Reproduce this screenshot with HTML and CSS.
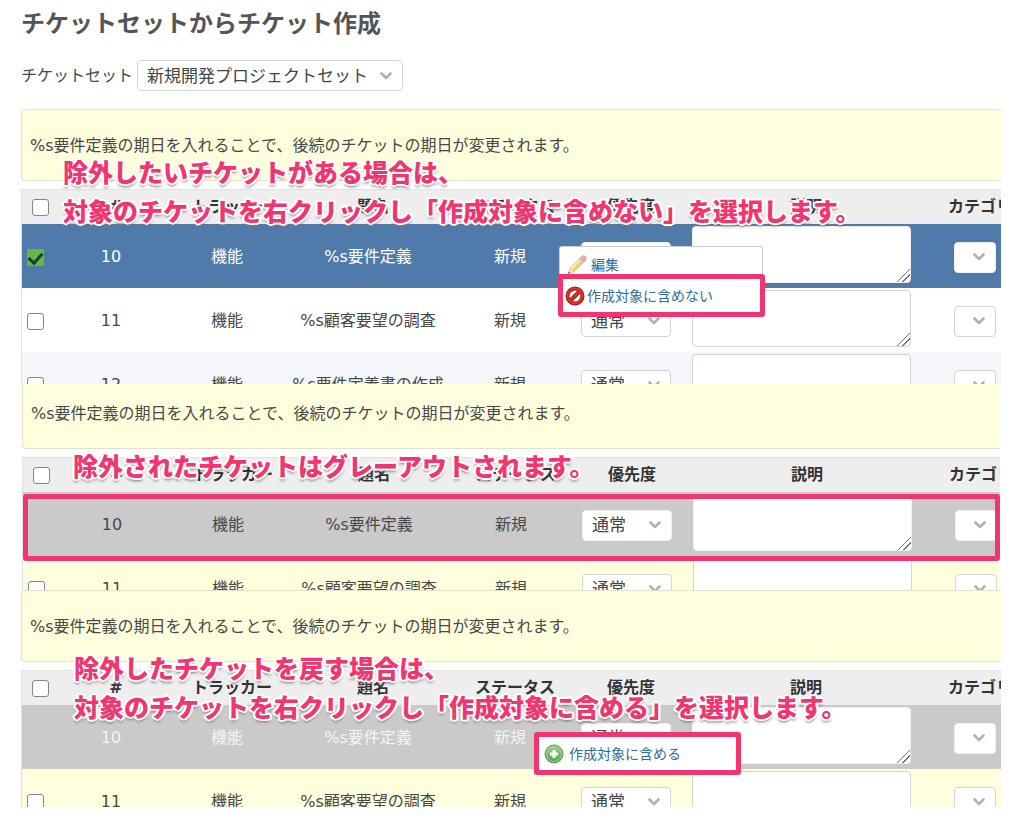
FILE: index.html
```
<!DOCTYPE html>
<html lang="ja">
<head>
<meta charset="utf-8">
<title>チケットセットからチケット作成</title>
<link rel="stylesheet" href="styles.css">
</head>
<body>
<svg class="sprite" aria-hidden="true">
  <symbol id="chevron" viewBox="0 0 12 8"><path d="M1.500 1.500 6 6l4.500-4.500" fill="none" stroke="#b0b0b0" stroke-width="2.600" stroke-linecap="round" stroke-linejoin="round"/></symbol>
</svg>
<main class="page">
  <h1 class="title">チケットセットからチケット作成</h1>
  <div class="set-picker">
    <label for="ticket-set">チケットセット</label>
    <span class="select select-set"><select id="ticket-set"><option>新規開発プロジェクトセット</option></select><svg><use href="#chevron"/></svg></span>
  </div>

  <section class="panel panel-select">
    <p class="notice">%s要件定義の期日を入れることで、後続のチケットの期日が変更されます。</p>
    <table class="tickets">
      <colgroup><col class="c-check"><col class="c-id"><col class="c-tracker"><col class="c-subject"><col class="c-status"><col class="c-priority"><col class="c-desc"><col class="c-category"></colgroup>
      <thead><tr><th><input type="checkbox" aria-label="すべて選択"></th><th>#</th><th>トラッカー</th><th>題名</th><th>ステータス</th><th>優先度</th><th>説明</th><th>カテゴリ</th></tr></thead>
      <tbody>
        <tr class="selected"><td><input type="checkbox" aria-label="10" checked></td><td>10</td><td>機能</td><td>%s要件定義</td><td>新規</td>
          <td><span class="select select-priority"><select aria-label="優先度"><option>通常</option></select><svg><use href="#chevron"/></svg></span></td>
          <td class="desc"><textarea aria-label="説明"></textarea></td>
          <td><span class="select select-category"><select aria-label="カテゴリ"><option></option></select><svg><use href="#chevron"/></svg></span></td></tr>
        <tr><td><input type="checkbox" aria-label="11"></td><td>11</td><td>機能</td><td>%s顧客要望の調査</td><td>新規</td>
          <td><span class="select select-priority"><select aria-label="優先度"><option>通常</option></select><svg><use href="#chevron"/></svg></span></td>
          <td class="desc"><textarea aria-label="説明"></textarea></td>
          <td><span class="select select-category"><select aria-label="カテゴリ"><option></option></select><svg><use href="#chevron"/></svg></span></td></tr>
        <tr class="even"><td><input type="checkbox" aria-label="12"></td><td>12</td><td>機能</td><td>%s要件定義書の作成</td><td>新規</td>
          <td><span class="select select-priority"><select aria-label="優先度"><option>通常</option></select><svg><use href="#chevron"/></svg></span></td>
          <td class="desc"><textarea aria-label="説明"></textarea></td>
          <td><span class="select select-category"><select aria-label="カテゴリ"><option></option></select><svg><use href="#chevron"/></svg></span></td></tr>
      </tbody>
    </table>
    <p class="callout">除外したいチケットがある場合は、<br>対象のチケットを右クリックし「作成対象に含めない」を選択します。</p>
    <div class="menu menu-exclude">
      <a class="item item-edit" href="#edit"><svg viewBox="0 0 20 20"><path d="M1 19l2-6L14 2l4 4L7 17z" fill="#f2d36b" stroke="#d9b96e" stroke-width=".6"/><path d="M4 14 15 3" stroke="#fff2a8" stroke-width="2"/><path d="M13 3l2-2q2-1 3.500.5T19 5l-2 2z" fill="#f0a9a6" stroke="#d9a09c" stroke-width=".6"/><path d="M12 4l4 4" stroke="#c4c4c8" stroke-width="1.500"/><path d="M1 19l2-5.500L6.500 17z" fill="#f3dfc3"/><path d="M1 19l.8-2.300L3.300 18z" fill="#555"/></svg>編集</a>
      <a class="item item-framed" href="#exclude"><svg viewBox="0 0 20 20"><circle cx="10" cy="10" r="7.500" fill="#fff" stroke="#a91510" stroke-width="4"/><path d="M5 15 15 5" stroke="#a91510" stroke-width="4"/><circle cx="10" cy="10" r="7.500" fill="none" stroke="#d33a32" stroke-width="2"/><path d="M5 15 15 5" stroke="#d33a32" stroke-width="2"/></svg>作成対象に含めない</a>
    </div>
  </section>

  <section class="panel panel-excluded">
    <p class="notice">%s要件定義の期日を入れることで、後続のチケットの期日が変更されます。</p>
    <table class="tickets">
      <colgroup><col class="c-check"><col class="c-id"><col class="c-tracker"><col class="c-subject"><col class="c-status"><col class="c-priority"><col class="c-desc"><col class="c-category"></colgroup>
      <thead><tr><th><input type="checkbox" aria-label="すべて選択"></th><th>#</th><th>トラッカー</th><th>題名</th><th>ステータス</th><th>優先度</th><th>説明</th><th>カテゴリ</th></tr></thead>
      <tbody>
        <tr class="excluded"><td></td><td>10</td><td>機能</td><td>%s要件定義</td><td>新規</td>
          <td><span class="select select-priority"><select aria-label="優先度"><option>通常</option></select><svg><use href="#chevron"/></svg></span></td>
          <td class="desc"><textarea aria-label="説明"></textarea></td>
          <td><span class="select select-category"><select aria-label="カテゴリ"><option></option></select><svg><use href="#chevron"/></svg></span></td></tr>
        <tr class="hovered"><td><input type="checkbox" aria-label="11"></td><td>11</td><td>機能</td><td>%s顧客要望の調査</td><td>新規</td>
          <td><span class="select select-priority"><select aria-label="優先度"><option>通常</option></select><svg><use href="#chevron"/></svg></span></td>
          <td class="desc"><textarea aria-label="説明"></textarea></td>
          <td><span class="select select-category"><select aria-label="カテゴリ"><option></option></select><svg><use href="#chevron"/></svg></span></td></tr>
      </tbody>
    </table>
    <div class="row-frame"></div>
    <p class="callout">除外されたチケットはグレーアウトされます。</p>
  </section>

  <section class="panel panel-restore">
    <p class="notice">%s要件定義の期日を入れることで、後続のチケットの期日が変更されます。</p>
    <table class="tickets">
      <colgroup><col class="c-check"><col class="c-id"><col class="c-tracker"><col class="c-subject"><col class="c-status"><col class="c-priority"><col class="c-desc"><col class="c-category"></colgroup>
      <thead><tr><th><input type="checkbox" aria-label="すべて選択"></th><th>#</th><th>トラッカー</th><th>題名</th><th>ステータス</th><th>優先度</th><th>説明</th><th>カテゴリ</th></tr></thead>
      <tbody>
        <tr class="excluded picked"><td></td><td>10</td><td>機能</td><td>%s要件定義</td><td>新規</td>
          <td><span class="select select-priority"><select aria-label="優先度"><option>通常</option></select><svg><use href="#chevron"/></svg></span></td>
          <td class="desc"><textarea aria-label="説明"></textarea></td>
          <td><span class="select select-category"><select aria-label="カテゴリ"><option></option></select><svg><use href="#chevron"/></svg></span></td></tr>
        <tr class="hovered"><td><input type="checkbox" aria-label="11"></td><td>11</td><td>機能</td><td>%s顧客要望の調査</td><td>新規</td>
          <td><span class="select select-priority"><select aria-label="優先度"><option>通常</option></select><svg><use href="#chevron"/></svg></span></td>
          <td class="desc"><textarea aria-label="説明"></textarea></td>
          <td><span class="select select-category"><select aria-label="カテゴリ"><option></option></select><svg><use href="#chevron"/></svg></span></td></tr>
      </tbody>
    </table>
    <p class="callout">除外したチケットを戻す場合は、<br>対象のチケットを右クリックし「作成対象に含める」を選択します。</p>
    <div class="menu menu-include">
      <a class="item item-framed item-include" href="#include"><svg viewBox="0 0 20 20"><defs><linearGradient id="g" x2="0" y2="1"><stop offset="0" stop-color="#a5d49a"/><stop offset="1" stop-color="#4fa044"/></linearGradient></defs><circle cx="10" cy="10" r="9" fill="url(#g)" stroke="#5d9d55"/><circle cx="10" cy="10" r="7.500" fill="none" stroke="#9fcf95"/><path d="M10 6v8M6 10h8" stroke="#fff" stroke-width="3"/></svg>作成対象に含める</a>
    </div>
  </section>
</main>
</body>
</html>
```
FILE: styles.css
```
* { box-sizing: border-box; }
body {
  margin: 0;
  background: #fff;
  color: #484848;
  font: 16px/24px "DejaVu Sans", "Noto Sans CJK JP", sans-serif;
}
.sprite { position: absolute; width: 0; height: 0; }
.page { padding: 6px 23px 18px 21px; }
.title {
  margin: 0;
  color: #555;
  font-size: 24px;
  line-height: 36px;
  font-weight: 700;
}
.set-picker {
  display: flex;
  align-items: center;
  gap: 4px;
  margin: 18px 0;
}

/* Form controls */
.select { display: inline-grid; align-items: center; vertical-align: middle; }
.select select, .select svg { grid-area: 1 / 1; }
.select svg {
  justify-self: end;
  width: 12px;
  height: 8px;
  margin-right: 11px;
  pointer-events: none;
}
select {
  appearance: none;
  width: 100%;
  height: 31px;
  padding: 0 9px;
  border: 1px solid #d4d4d4;
  border-radius: 4px;
  background: #fff;
  color: #444;
  font: 17px/24px "DejaVu Sans", "Noto Sans CJK JP", sans-serif;
}
.select-set select { padding-right: 34px; }
.select-priority { width: 90px; }
.select-category { width: 42px; }
textarea {
  display: block;
  width: 219px;
  height: 57px;
  margin: 0 auto;
  border: 1px solid #d4d4d4;
  border-radius: 4px;
  background: #fff;
}
textarea::-webkit-resizer {
  background: linear-gradient(135deg, transparent 54%, #777 54%, #777 59%, transparent 59%, transparent 72%, #777 72%, #777 77%, transparent 77%);
}
input[type="checkbox"] {
  appearance: none;
  display: inline-block;
  width: 17px;
  height: 17px;
  margin: 0;
  border: 1px solid #858585;
  border-radius: 3px;
  background: #fff;
  vertical-align: middle;
}
input[type="checkbox"]:checked {
  border-color: #5dba43;
  border-radius: 1px;
  background: #5dba43;
}
input[type="checkbox"]:checked::before {
  content: "";
  display: block;
  width: 6px;
  height: 11px;
  margin: 0 auto;
  border: solid #1e3d2e;
  border-width: 0 3px 3px 0;
  transform: rotate(42deg);
}

/* Panels crop their content at the bottom edge */
.panel { position: relative; overflow: hidden; }
.panel-select { height: 275px; }
.panel-excluded { height: 206px; margin: 0 1px; }
.panel-restore { height: 217px; }
.notice {
  margin: 0 0 8px;
  padding: 24px 8px 22px;
  border: 1px solid #e2e2cf;
  border-right: 0;
  border-radius: 4px 0 0 4px;
  background: #ffffdd;
}
.panel-excluded .notice { margin-top: -7px; }

/* Ticket table */
.tickets {
  width: 1014px;
  table-layout: fixed;
  border-collapse: separate;
  border-spacing: 0;
  border-left: 1px solid #e0e0e0;
  text-align: center;
}
.c-check { width: 37px; }
.c-id { width: 114px; }
.c-tracker { width: 118px; }
.c-subject { width: 164px; }
.c-status { width: 120px; }
.c-priority { width: 112px; }
.c-desc { width: 238px; }
.c-category { width: 110px; }
th {
  height: 35px;
  padding: 0;
  border-top: 1px solid #e2e2e2;
  background: #eee;
  color: #333;
  font-weight: 700;
  white-space: nowrap;
}
td { height: 64px; padding: 2px 10px 0 0; white-space: nowrap; }
td.desc { padding-bottom: 5px; }
.even { background: #f5f6f9; }
.hovered { background: #ffffdd; }
.selected { background: #507aaa; color: #fff; }
.excluded { background: #cacaca; }
.picked { color: #f4f4f4; }
.selected select, .selected textarea,
.excluded select, .excluded textarea { border-color: #f0f0f0; }

/* Annotations over the panels */
.callout {
  position: absolute;
  left: 42px;
  top: 43px;
  margin: 0;
  color: #f0356f;
  font: 900 25px/39px "Noto Sans CJK JP", sans-serif;
  white-space: nowrap;
  text-shadow: 2px 0 #fff, -2px 0 #fff, 0 2px #fff, 0 -2px #fff,
    1px 1px #fff, -1px 1px #fff, 1px -1px #fff, -1px -1px #fff,
    2px 1px #fff, -2px 1px #fff, 2px -1px #fff, -2px -1px #fff,
    0 3px 3px #777;
}
.panel-excluded .callout { left: 51px; top: 62px; }
.panel-restore .callout { left: 53px; top: 58px; }
.row-frame {
  position: absolute;
  left: 1px;
  right: 0;
  top: 110px;
  height: 67px;
  border: 5px solid #f0356f;
  border-radius: 3px;
}
.menu { position: absolute; width: 207px; font-size: 14px; line-height: 20px; }
.menu-exclude { left: 537px; top: 137px; }
.menu-include { left: 513px; top: 142px; }
.item {
  display: flex;
  align-items: center;
  background: #fff;
  color: #2d6c98;
  text-decoration: none;
}
.item svg { width: 20px; height: 20px; flex: none; }
.item-edit {
  gap: 4px;
  height: 28px;
  margin: 0 2px 0 1px;
  padding: 8px 7px 0;
  border: 1px solid #ccc;
  border-bottom: 0;
  border-radius: 3px 3px 0 0;
}
.item-framed {
  gap: 2px;
  height: 43px;
  padding: 0 2px;
  border: 5px solid #f0356f;
  border-radius: 3px;
}
.item-include { gap: 5px; padding: 0 5px; }
```
